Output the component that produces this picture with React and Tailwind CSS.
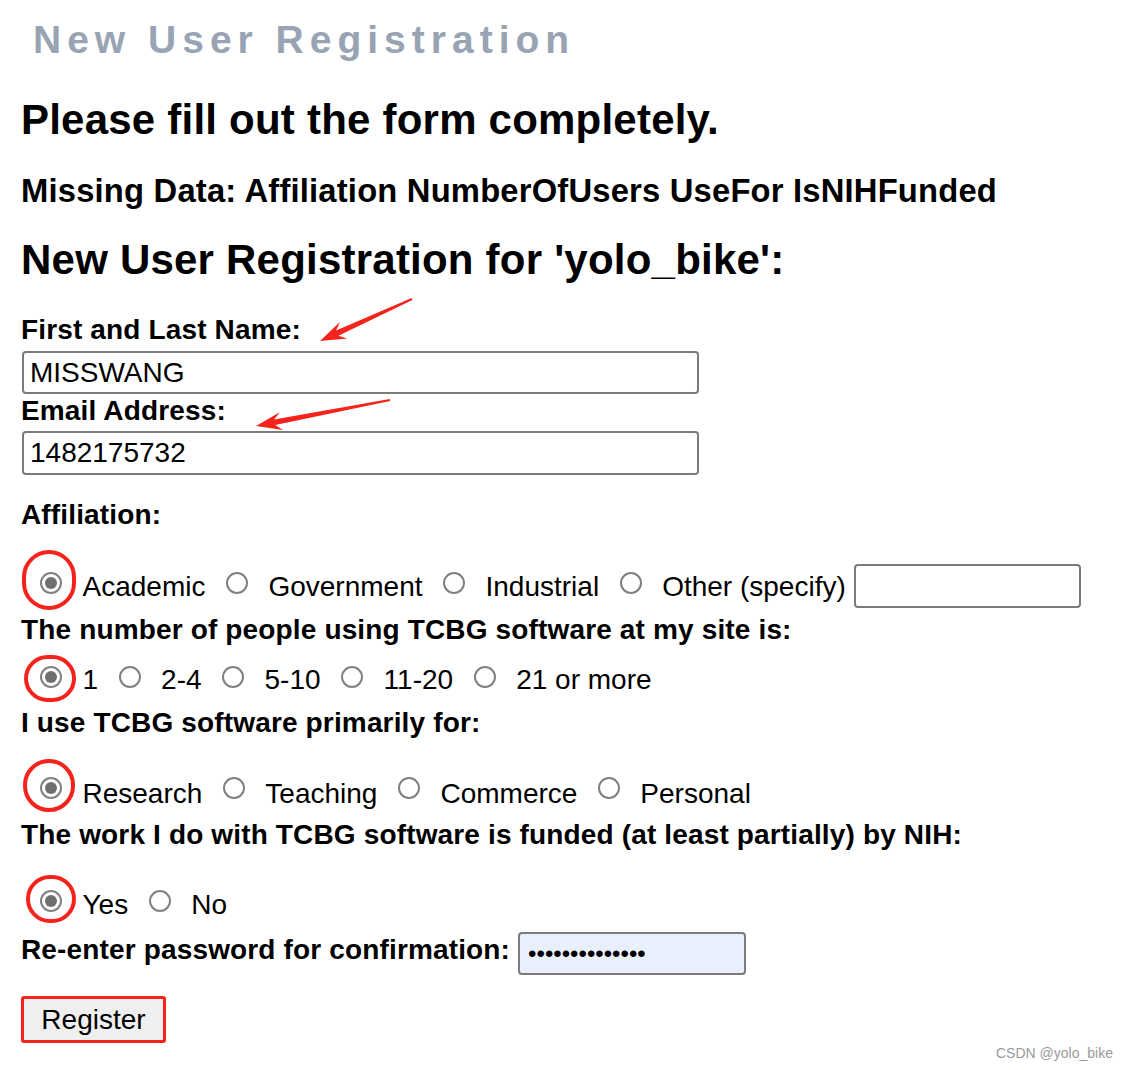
import React from "react";

// red annotation arrow, drawn as a tapered polygon from tail to tip
function arrowPoints(x1, y1, x2, y2) {
  const dx = x2 - x1;
  const dy = y2 - y1;
  const len = Math.hypot(dx, dy);
  const ux = dx / len;
  const uy = dy / len;
  const nx = -uy;
  const ny = ux;
  const at = (d, w) => [x1 + ux * d + nx * w, y1 + uy * d + ny * w];
  const pts = [
    at(0, 1),
    at(len - 19, 2.8),
    at(len - 26, 9),
    [x2, y2],
    at(len - 26, -9),
    at(len - 19, -2.8),
    at(0, -1),
  ];
  return pts.map((p) => p.map((v) => v.toFixed(1)).join(",")).join(" ");
}

function Radio({ checked, ring, className = "" }) {
  return (
    <span className={`relative block w-[22px] h-[22px] shrink-0 ${className}`}>
      <span className="absolute inset-0 rounded-full border-2 border-[#808080] bg-white flex items-center justify-center">
        {checked && <span className="block w-[12px] h-[12px] rounded-full bg-[#6f6f6f]" />}
      </span>
      {ring && <span className={`absolute rounded-full border-[4px] border-[#f5231b] ${ring}`} />}
    </span>
  );
}

function Label({ children, className = "" }) {
  return (
    <div className={`h-[32px] leading-[32px] text-[28px] font-bold tracking-[0.15px] whitespace-nowrap ${className}`}>
      {children}
    </div>
  );
}

function Opt({ children, className = "" }) {
  return <span className={`block h-[32px] leading-[32px] text-[28px] whitespace-nowrap ${className}`}>{children}</span>;
}

export default function App() {
  return (
    <div
      className="relative w-[1127px] h-[1070px] bg-white text-black overflow-hidden pl-[21px] pt-[20px]"
      style={{ fontFamily: '"Liberation Sans", Arial, sans-serif' }}
    >
      {/* page title */}
      <div className="h-[40px] leading-[40px] text-[39px] font-bold tracking-[6px] text-[#98a4b3] ml-[12px] whitespace-nowrap">
        New User Registration
      </div>

      <h2 className="mt-[38px] h-[44px] leading-[44px] text-[42px] font-bold tracking-[0.22px] whitespace-nowrap">
        Please fill out the form completely.
      </h2>
      <h3 className="mt-[31px] h-[36px] leading-[36px] text-[32.76px] font-bold tracking-[0.19px] whitespace-nowrap">
        Missing Data: Affiliation NumberOfUsers UseFor IsNIHFunded
      </h3>
      <h2 className="mt-[29px] h-[44px] leading-[44px] text-[42px] font-bold tracking-[0.22px] whitespace-nowrap">
        New User Registration for 'yolo_bike':
      </h2>

      <Label className="mt-[32px]">First and Last Name:</Label>
      <input
        readOnly
        value="MISSWANG"
        className="block mt-[5px] ml-px w-[677px] h-[43px] border-2 border-[#7b7b7b] rounded-[4px] px-[6px] text-[28px] bg-white outline-none"
      />
      <Label className="mt-[1px]">Email Address:</Label>
      <input
        readOnly
        value="1482175732"
        className="block mt-[4px] ml-px w-[677px] h-[44px] border-2 border-[#7b7b7b] rounded-[4px] px-[6px] text-[28px] bg-white outline-none"
      />

      <Label className="mt-[24px]">Affiliation:</Label>
      <div className="mt-[33px] h-[44px] flex items-start gap-[20.5px] pl-[19px]">
        <Radio checked className="mt-[8px]" ring="left-[-18px] top-[-22px] w-[54px] h-[60px]" />
        <Opt className="mt-[7px]">Academic</Opt>
        <Radio className="mt-[8px]" />
        <Opt className="mt-[7px]">Government</Opt>
        <Radio className="mt-[8px]" />
        <Opt className="mt-[7px]">Industrial</Opt>
        <Radio className="mt-[8px]" />
        <div className="flex items-start gap-[8px]">
          <Opt className="mt-[7px]">Other (specify)</Opt>
          <input
            readOnly
            value=""
            className="block w-[227px] h-[44px] border-2 border-[#7b7b7b] rounded-[4px] px-[5px] text-[28px] bg-white outline-none"
          />
        </div>
      </div>

      <Label className="mt-[6px]">The number of people using TCBG software at my site is:</Label>
      <div className="mt-[18px] h-[32px] flex items-start gap-[20.5px] pl-[19px]">
        <Radio checked className="mt-[2px]" ring="left-[-16px] top-[-11px] w-[52px] h-[47px]" />
        <Opt>1</Opt>
        <Radio className="mt-[2px]" />
        <Opt>2-4</Opt>
        <Radio className="mt-[2px]" />
        <Opt>5-10</Opt>
        <Radio className="mt-[2px]" />
        <Opt>11-20</Opt>
        <Radio className="mt-[2px]" />
        <Opt>21 or more</Opt>
      </div>

      <Label className="mt-[11px]">I use TCBG software primarily for:</Label>
      <div className="mt-[38px] h-[33px] flex items-start gap-[20.5px] pl-[19px]">
        <Radio checked ring="left-[-17px] top-[-18px] w-[52px] h-[53px]" />
        <Opt className="mt-[1px]">Research</Opt>
        <Radio />
        <Opt className="mt-[1px]">Teaching</Opt>
        <Radio />
        <Opt className="mt-[1px]">Commerce</Opt>
        <Radio />
        <Opt className="mt-[1px]">Personal</Opt>
      </div>

      <Label className="mt-[9px]">The work I do with TCBG software is funded (at least partially) by NIH:</Label>
      <div className="mt-[38px] h-[32px] flex items-start gap-[20.5px] pl-[19px]">
        <Radio checked className="mt-[1px]" ring="left-[-14px] top-[-15px] w-[50px] h-[48px]" />
        <Opt>Yes</Opt>
        <Radio className="mt-[1px]" />
        <Opt>No</Opt>
      </div>

      <div className="mt-[11px] h-[43px] flex items-start gap-[8px]">
        <Label className="mt-[2px]">Re-enter password for confirmation:</Label>
        <input
          readOnly
          type="password"
          value="MISSWANG123456"
          className="block w-[228px] h-[43px] border-2 border-[#7b7b7b] rounded-[4px] pl-[8px] pr-[6px] text-[24px] bg-[#e8f0fe] outline-none"
        />
      </div>

      <div className="mt-[21px] w-[145px] h-[47px] border-[3px] border-[#f5231b] rounded-[3px]">
        <button className="w-full h-full bg-[#efefef] text-[28px] leading-none text-black">Register</button>
      </div>

      {/* annotation arrows */}
      <svg className="absolute left-0 top-0 pointer-events-none" width="1127" height="1070">
        <polygon points={arrowPoints(412, 299, 320, 341)} fill="#f5231b" />
        <polygon points={arrowPoints(390, 400, 256, 426)} fill="#f5231b" />
      </svg>

      {/* watermark */}
      <div className="absolute left-[996px] top-[1045px] text-[14px] leading-[16px] text-[#9a9a9a] whitespace-nowrap">
        CSDN @yolo_bike
      </div>
    </div>
  );
}
